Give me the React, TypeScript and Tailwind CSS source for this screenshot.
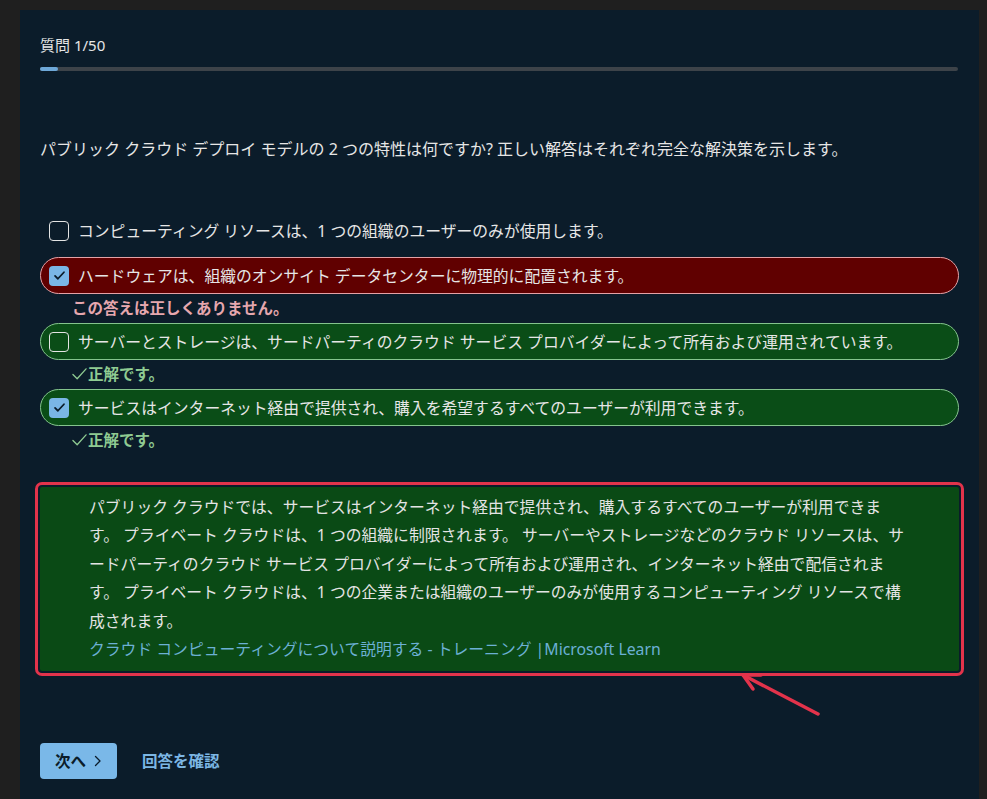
import React from 'react';

type Option = {
  text: string;
  checked: boolean;
  state: 'none' | 'wrong' | 'right';
};

const options: Option[] = [
  { text: 'コンピューティング リソースは、1 つの組織のユーザーのみが使用します。', checked: false, state: 'none' },
  { text: 'ハードウェアは、組織のオンサイト データセンターに物理的に配置されます。', checked: true, state: 'wrong' },
  { text: 'サーバーとストレージは、サードパーティのクラウド サービス プロバイダーによって所有および運用されています。', checked: false, state: 'right' },
  { text: 'サービスはインターネット経由で提供され、購入を希望するすべてのユーザーが利用できます。', checked: true, state: 'right' },
];

const Checkbox = ({ checked }: { checked: boolean }) =>
  checked ? (
    <span className="flex h-[20px] w-[20px] shrink-0 items-center justify-center rounded-[4px] bg-[#7ab6e6]">
      <svg width="13" height="13" viewBox="0 0 16 16" fill="none">
        <path d="M2.5 8.5l3.5 3.5 7.5-8" stroke="#0b1c2a" strokeWidth="2.2" strokeLinecap="round" strokeLinejoin="round" />
      </svg>
    </span>
  ) : (
    <span className="h-[20px] w-[20px] shrink-0 rounded-[4px] border-[1.5px] border-[#e4e4e4]" />
  );

const App = () => {
  return (
    <div
      className="min-h-screen bg-[#1f1f1f] pl-[20px] pt-[10px]"
      style={{ fontFamily: '"Noto Sans", "Noto Sans CJK JP", sans-serif' }}
    >
      <div className="relative min-h-[789px] w-[959px] bg-[#0b1c2a] px-[20px] pt-[24px] pb-[20px] text-[#e6e6e6]">
        {/* header + progress */}
        <div className="text-[15px] leading-[22px]">質問 1/50</div>
        <div className="mt-[11px] h-[4px] w-[918px] rounded-full bg-[#3d4349]">
          <div className="h-full w-[18px] rounded-full bg-[#6ea8d8]" />
        </div>

        {/* question */}
        <p className="mt-[66px] text-[16px] leading-[24px]">
          パブリック クラウド デプロイ モデルの 2 つの特性は何ですか? 正しい解答はそれぞれ完全な解決策を示します。
        </p>

        {/* options */}
        <div className="mt-[51px] flex flex-col">
          {options.map((o, idx) => {
            const box =
              o.state === 'wrong'
                ? 'bg-[#600000] border-[#e5a2a6]'
                : o.state === 'right'
                ? 'bg-[#0a4d17] border-[#84c48d]'
                : 'bg-transparent border-transparent';
            return (
              <div key={idx} className={o.state === 'none' ? 'mb-[8px]' : 'mb-[5px]'}>
                <div className={`flex h-[37px] items-center gap-[9px] rounded-full border px-[8px] ${box}`}>
                  <Checkbox checked={o.checked} />
                  <span className="whitespace-nowrap text-[15.8px] leading-[22px]">{o.text}</span>
                </div>
                {o.state === 'wrong' && (
                  <div className="mt-[4px] h-[20px] pl-[32px] text-[15.5px] font-bold leading-[20px] text-[#e6a7ae]">
                    この答えは正しくありません。
                  </div>
                )}
                {o.state === 'right' && (
                  <div className="mt-[4px] flex h-[20px] items-center pl-[32px] text-[15.5px] font-semibold leading-[20px] text-[#8fcb92]">
                    <svg width="15" height="14" viewBox="0 0 16 14" fill="none" className="mr-[1px]">
                      <path d="M1 7.5l4.5 4.5L15 1.5" stroke="#8fcb92" strokeWidth="1.4" strokeLinecap="round" strokeLinejoin="round" />
                    </svg>
                    正解です。
                  </div>
                )}
              </div>
            );
          })}
        </div>

        {/* explanation */}
        <div className="mt-[32px] rounded-[2px] bg-[#0a4a15] pt-[6px] pb-[8px] pl-[49px] pr-[30px] text-[15.8px] leading-[28.4px] text-[#e4e4e4] outline-[3px] outline-offset-[2px] outline-[#e3334b] outline-solid">
          <p>
            パブリック クラウドでは、サービスはインターネット経由で提供され、購入するすべてのユーザーが利用できま
            <br />
            す。 プライベート クラウドは、1 つの組織に制限されます。 サーバーやストレージなどのクラウド リソースは、サ
            <br />
            ードパーティのクラウド サービス プロバイダーによって所有および運用され、インターネット経由で配信されま
            <br />
            す。 プライベート クラウドは、1 つの企業または組織のユーザーのみが使用するコンピューティング リソースで構
            <br />
            成されます。
          </p>
          <a href="#" className="block text-[#6cb0d4]">
            クラウド コンピューティングについて説明する - トレーニング |Microsoft Learn
          </a>
        </div>

        {/* annotation arrow */}
        <svg className="pointer-events-none absolute left-[680px] top-[644px]" width="140" height="80" viewBox="0 0 140 80" fill="none">
          <path d="M118 60L43 21" stroke="#e3334b" strokeWidth="3.5" strokeLinecap="round" />
          <path d="M61 21L43 21L53 35" stroke="#e3334b" strokeWidth="3.5" strokeLinecap="round" strokeLinejoin="round" />
        </svg>

        {/* actions */}
        <div className="mt-[72px] flex items-center gap-[25px]">
          <button className="flex h-[36px] w-[77px] items-center justify-center gap-[8px] rounded-[4px] bg-[#7ab8e8] text-[15.5px] font-semibold text-[#0b1c2a]">
            次へ
            <svg width="8" height="12" viewBox="0 0 8 12" fill="none">
              <path d="M1.5 1.5L6 6l-4.5 4.5" stroke="#0b1c2a" strokeWidth="1.3" strokeLinecap="round" strokeLinejoin="round" />
            </svg>
          </button>
          <a href="#" className="text-[15.5px] font-semibold text-[#7cb6e4]">
            回答を確認
          </a>
        </div>
      </div>
    </div>
  );
};

export default App;
